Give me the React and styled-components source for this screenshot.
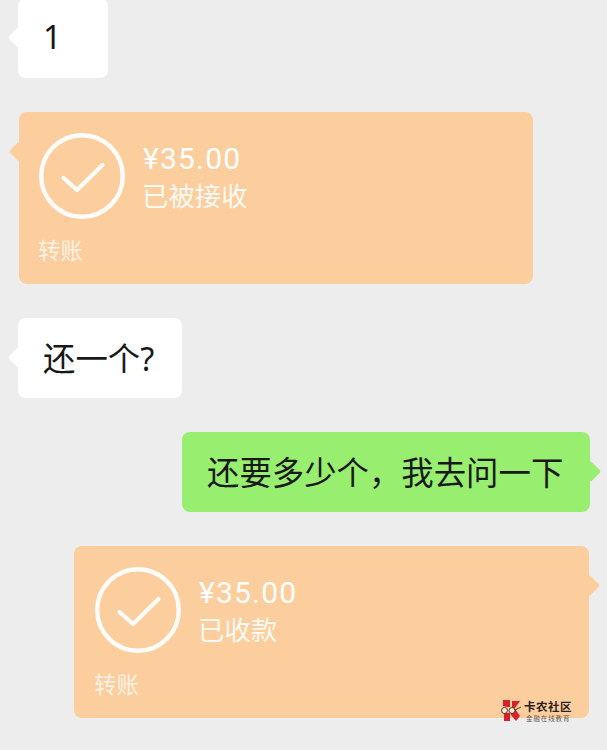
import React from 'react'
import styled, { createGlobalStyle } from 'styled-components'

const GlobalStyle = createGlobalStyle`
  html, body {
    margin: 0;
    padding: 0;
    background: #ededed;
    overflow: hidden;
  }
`

const CJK = `"Noto Sans CJK SC", "Noto Sans", sans-serif`

function CheckCircle() {
    return (
        <svg width="86" height="86" viewBox="0 0 86 86" fill="none">
            <circle cx="43" cy="43" r="40.8" stroke="#fff" strokeWidth="4.4" opacity="0.95" />
            <path d="M24.5 45 L38 57 L63.5 32" stroke="#fff" strokeWidth="4.2" strokeLinecap="round" strokeLinejoin="round" opacity="0.95" />
        </svg>
    )
}

function TransferCard({ left, width, side, inset, status }) {
    return (
        <Row $left={left}>
            <Bubble $bg="#fdce9d" $side={side} $width={width} $height={172}>
                <CardTop $inset={inset}>
                    <CheckCircle />
                    <CardText>
                        <Amount>¥35.00</Amount>
                        <Status>{status}</Status>
                    </CardText>
                </CardTop>
                <CardLabel $inset={inset}>转账</CardLabel>
            </Bubble>
        </Row>
    )
}

function App() {
    return (
        <Page>
            <GlobalStyle />
            <Chat>
                <Row $left={18}>
                    <Bubble $bg="#ffffff" $side="left" $width={90} $height={80}>
                        <Message>1</Message>
                    </Bubble>
                </Row>
                <TransferCard left={19} width={514} side="left" inset={20} status="已被接收" />
                <Row $left={18}>
                    <Bubble $bg="#ffffff" $side="left" $width={164} $height={80}>
                        <Message>还一个?</Message>
                    </Bubble>
                </Row>
                <Row $left={182}>
                    <Bubble $bg="#98ee6e" $side="right" $width={408} $height={80}>
                        <Message>还要多少个，我去问一下</Message>
                    </Bubble>
                </Row>
                <TransferCard left={74} width={515} side="right" inset={21} status="已收款" />
            </Chat>
            <Watermark>
                <svg width="21" height="23" viewBox="0 0 21 23">
                    <path d="M2 1 H9 V8 H6 L2 7 Z" fill="#d8202a" />
                    <path d="M11 2 H19 L14 9 H11 Z" fill="#d8202a" />
                    <path d="M9 9 L14 10 L19 17 L15 22 L10 16 Z" fill="#d8202a" />
                    <path d="M3 14 H9 V22 H3 Z" fill="#d8202a" />
                    <circle cx="3.5" cy="11.5" r="3" fill="#f6e6d0" stroke="#3a2a20" strokeWidth="0.9" />
                    <circle cx="11" cy="11.5" r="3" fill="#f6e6d0" stroke="#3a2a20" strokeWidth="0.9" />
                    <path d="M14 11 L20 8" stroke="#3a2a20" strokeWidth="0.9" />
                </svg>
                <WatermarkText>
                    <WatermarkTitle>卡农社区</WatermarkTitle>
                    <WatermarkSub>金融在线教育</WatermarkSub>
                </WatermarkText>
            </Watermark>
        </Page>
    )
}

export default App


const Page = styled.div`
    position: relative;
    width: 607px;
    height: 750px;
    overflow: hidden;
    background: #ededed;
`

const Chat = styled.div`
    display: flex;
    flex-direction: column;
    gap: 34px;
    margin-top: -2px;
`

const Row = styled.div`
    display: flex;
    padding-left: ${(p) => p.$left}px;
`

const Bubble = styled.div`
    position: relative;
    box-sizing: border-box;
    width: ${(p) => p.$width}px;
    height: ${(p) => p.$height}px;
    background: ${(p) => p.$bg};
    border-radius: 8px;
    display: flex;
    flex-direction: column;

    &:before {
        content: "";
        position: absolute;
        top: 32px;
        ${(p) => p.$side}: -7.5px;
        width: 15px;
        height: 15px;
        background: ${(p) => p.$bg};
        transform: rotate(45deg);
        border-radius: 2px;
    }
`

const Message = styled.div`
    position: relative;
    box-sizing: border-box;
    height: 80px;
    padding: 0 0 4px 25px;
    display: flex;
    align-items: center;
    font-family: "Noto Sans", ${CJK};
    font-size: 32.4px;
    font-weight: 400;
    color: #191919;
    white-space: nowrap;
`

const CardTop = styled.div`
    position: relative;
    display: flex;
    gap: 18px;
    padding: 21px 0 0 ${(p) => p.$inset}px;
`

const CardText = styled.div`
    display: flex;
    flex-direction: column;
    color: #fff;
    padding-top: 7px;
`

const Amount = styled.div`
    font-family: Roboto, ${CJK};
    font-size: 30px;
    font-weight: 400;
    line-height: 38px;
    letter-spacing: 1.2px;
`

const Status = styled.div`
    font-family: ${CJK};
    font-size: 26.4px;
    line-height: 34px;
    opacity: 0.9;
    margin-left: -1px;
`

const CardLabel = styled.div`
    padding: 13px 0 0 ${(p) => p.$inset - 1}px;
    font-family: ${CJK};
    font-size: 22.4px;
    line-height: 34px;
    color: #fff;
    opacity: 0.75;
`

const Watermark = styled.div`
    position: absolute;
    left: 501px;
    top: 699px;
    display: flex;
    align-items: center;
    gap: 2px;
`

const WatermarkText = styled.div`
    display: flex;
    flex-direction: column;
    align-items: flex-start;
`

const WatermarkTitle = styled.div`
    font-family: ${CJK};
    font-size: 11.5px;
    font-weight: 700;
    line-height: 13px;
    letter-spacing: 0.5px;
    color: #2a2220;
`

const WatermarkSub = styled.div`
    margin: 1px 0 0 2px;
    font-family: ${CJK};
    font-size: 6.5px;
    line-height: 8px;
    letter-spacing: 0.9px;
    color: #6b5a50;
`
